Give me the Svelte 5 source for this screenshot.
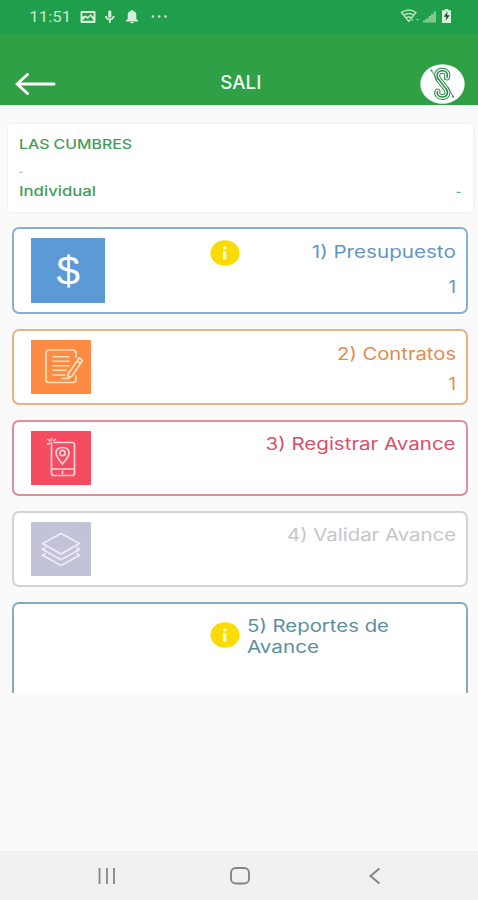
<script>
  // Stretches a label horizontally so that it takes up the given width.
  function fit(node, width) {
    node.style.transform = `scaleX(${width / node.getBoundingClientRect().width})`;
  }

  const cards = [
    { kind: 'budget', label: '1) Presupuesto', width: 144, count: '1', info: true },
    { kind: 'contracts', label: '2) Contratos', width: 119, count: '1' },
    { kind: 'progress', label: '3) Registrar Avance', width: 190 },
    { kind: 'validate', label: '4) Validar Avance', width: 169 }
  ];
</script>

{#snippet info()}
  <svg class="info" width="30" height="26" viewBox="0 0 30 26">
    <ellipse cx="15" cy="13" rx="14.6" ry="12.8" fill="#fadb05" />
    <circle cx="14.8" cy="7.900" r="1.700" fill="#fffbe0" />
    <path d="M13 11h3.300v8.500H13z" fill="#fffbe0" />
  </svg>
{/snippet}

<div class="screen">
  <div class="status">
    <span class="time"><span class="fit" use:fit={42}>11:51</span></span>
    <svg class="notes" width="90" height="16" viewBox="0 0 90 16">
      <path fill="#d3f0d6" fill-rule="evenodd" d="M1.500 2h13q1 0 1 1v10q0 1-1 1h-13q-1 0-1-1V3q0-1 1-1zM2.300 11.800h11.500L10.500 7.200 7.800 10 5.500 8.600zM2.400 4v3.500l3-1 2.600 1.300 2.500-2.800 3.100 3V4z" />
      <path fill="#d3f0d6" d="M28.200 2.500q0-1 1.600-1t1.600 1v5.200q0 1-1.600 1t-1.600-1zM25 7h1.800q.4 2.700 3 2.800 2.600-.1 3-2.800h1.800q-.3 3.500-3.900 4.200V14h-1.800v-2.800Q25.300 10.500 25 7z" />
      <path fill="#d3f0d6" d="M50.700 2.100q0-1.200 1.300-1.200t1.300 1.200q3 .7 3 4v3.600l1.700 2v.7h-12v-.7l1.700-2V6.100q0-3.300 3-4zM50.200 13h3.600q-.5 1.400-1.800 1.400T50.200 13z" />
      <circle cx="73" cy="7.500" r="1.300" fill="#c9ebcf" /><circle cx="79.200" cy="7.500" r="1.300" fill="#c9ebcf" /><circle cx="85.500" cy="7.500" r="1.300" fill="#c9ebcf" />
    </svg>
    <svg class="signals" width="54" height="18" viewBox="0 0 54 18">
      <g fill="none" stroke="#bce6bd" stroke-width="1.400">
        <path d="M1.500 4.500Q9 -.500 16 4.500L8.800 13.500zM3.800 7.300q5-3.500 10 0M6 10q3-2 5.700 0" />
      </g>
      <path d="M12.500 10.500l1.500 2h-3zM17.500 13l-1.500-2h3z" fill="#8fd19b" />
      <path d="M23 14.500v-2h2.500v-2h3v-2.500h2.500V6h2.500V3.500H36v11z" fill="#83c98d" />
      <path d="M43 2.300h1.800V1h3.500v1.300H51V15h-9V2.300z" fill="#d9f3da" />
      <path d="M47.500 3.500l-3.700 5.200h2.600l-.7 4 4-5.500h-2.600z" fill="#184f28" />
    </svg>
  </div>

  <header>
    <svg class="back" width="42" height="24" viewBox="0 0 42 24" fill="none" stroke="#fff" stroke-width="3" stroke-linecap="round" stroke-linejoin="round">
      <path d="M12.500 2.500 2 12l10.500 9.500M2.500 12h36.500" />
    </svg>
    <h1><span class="fit" use:fit={41}>SALI</span></h1>
    <svg class="logo" width="46" height="40" viewBox="0 0 46 40">
      <ellipse cx="23.500" cy="20" rx="22.200" ry="19.800" fill="#fff" />
      <g fill="none" stroke-linejoin="round" stroke-linecap="round">
        <path d="M28 13.500C29.500 8.500 26 6.300 22.500 6.800 18 7.500 17.200 11.500 19 14.500L27.500 25.500C30 29.500 27.500 33 23.500 33 19.500 33 17.500 30.500 18.500 27.500" stroke="#258c47" stroke-width="6" />
        <path d="M28 13.500C29.500 8.500 26 6.300 22.500 6.800 18 7.500 17.200 11.500 19 14.500L27.500 25.500C30 29.500 27.500 33 23.500 33 19.500 33 17.500 30.500 18.500 27.500" stroke="#fff" stroke-width="4" />
        <path d="M28 13.500C29.500 8.500 26 6.300 22.500 6.800 18 7.500 17.200 11.500 19 14.500L27.500 25.500C30 29.500 27.500 33 23.500 33 19.500 33 17.500 30.500 18.500 27.500" stroke="#258c47" stroke-width="1.500" />
        <path d="M12.500 6.500 18 15.500M29 23.500 34 32.500" stroke="#258c47" stroke-width=".9" />
      </g>
      <circle cx="12.500" cy="6.500" r="1" fill="#258c47" /><circle cx="34" cy="32.500" r="1" fill="#258c47" />
    </svg>
  </header>

  <main>
    <section class="summary">
      <div class="row"><span class="fit left" use:fit={113}>LAS CUMBRES</span></div>
      <div class="row faint"><span class="fit left" use:fit={4}>-</span></div>
      <div class="row last"><span class="fit left" use:fit={77}>Individual</span><span class="fit right dash" use:fit={5}>-</span></div>
    </section>

    {#each cards as card}
      <section class="card {card.kind}">
        <div class="tile">
          {#if card.kind === 'budget'}
            <span class="dollar"><span class="fit" use:fit={23.500}>$</span></span>
          {:else if card.kind === 'contracts'}
            <svg width="60" height="54" viewBox="0 0 60 54" fill="none" stroke="#ffe0bf" stroke-width="1.700" stroke-linecap="round" stroke-linejoin="round">
              <path d="M45 17v-4q0-3-3-3H18q-3 0-3 3v26q0 3.500 3 3.500h24q3 0 3-3v-3.500" />
              <path d="M22 16.700h16M22 21.300h16M22 25.800h16M22 30.300h13M22 35h12M31 38.500h6" stroke-width="1.400" />
              <path d="M37.500 33.500 48 18l3.500 2.500-10.500 15.500-4.500 2.500zM46 21l3.500 2.500" fill="#fc8a42" />
            </svg>
          {:else if card.kind === 'progress'}
            <svg width="60" height="54" viewBox="0 0 60 54" fill="none" stroke="#ffd3d8" stroke-width="1.700" stroke-linejoin="round">
              <path d="M25 11.500h16.500q2 0 2 2V42q0 2.500-2 2.500h-19q-2 0-2-2.500V15M20.500 38h23" />
              <path d="M31.500 33q-6.500-7.500-6.500-11 0-5.500 6.500-5.500T38 22q0 3.500-6.500 11z" />
              <circle cx="31.500" cy="22" r="2.700" />
              <path d="M16.500 8l3 2.200M20.500 7.300v2.500M24.500 8l-2 2.200M16 13.500l3.200-1.500M20.500 11v4M22.500 11.500h3M31.500 39.500v3.500" stroke-width="1.500" />
            </svg>
          {:else}
            <svg width="60" height="54" viewBox="0 0 60 54" fill="none" stroke="#ededf7" stroke-width="1.700" stroke-linejoin="round">
              <path d="M30 11.500 48.500 21.500 30 32 11.500 21.500z" />
              <path d="M14.500 25.500 11.500 27.500 30 37.700 48.500 27.500 45.500 25.500M14.500 31.500 11.500 33.300 30 43.500 48.500 33.300 45.500 31.500" />
            </svg>
          {/if}
        </div>
        {#if card.info}{@render info()}{/if}
        <div class="text">
          <div class="label"><span class="fit right" use:fit={card.width}>{card.label}</span></div>
          {#if card.count}<div class="count"><span class="fit right" use:fit={7.500}>{card.count}</span></div>{/if}
        </div>
      </section>
    {/each}

    <section class="card reports">
      {@render info()}
      <div class="lines">
        <div><span class="fit left" use:fit={142}>5) Reportes de</span></div>
        <div><span class="fit left" use:fit={72}>Avance</span></div>
      </div>
    </section>
  </main>

  <nav>
    <svg width="20" height="18" viewBox="0 0 20 18" stroke="#858585" stroke-width="1.800"><path d="M2.500 1v16M10 1v16M17 1v16" /></svg>
    <svg class="home" width="22" height="20" viewBox="0 0 22 20" fill="none" stroke="#858585" stroke-width="1.900"><rect x="2" y="2" width="18" height="15.500" rx="4.800" /></svg>
    <svg width="14" height="18" viewBox="0 0 14 18" fill="none" stroke="#858585" stroke-width="1.900"><path d="M11.500 1.500 2.500 9l9 7.500" /></svg>
  </nav>
</div>

<style>
  :global(body) { background: #fafafa; }
  .screen {
    width: 478px;
    height: 900px;
    display: flex;
    flex-direction: column;
    overflow: hidden;
    background: #fafafa;
    font-family: Inter, "Liberation Sans", sans-serif;
  }
  svg { display: block; flex: none; }
  .fit { display: inline-block; white-space: nowrap; }
  .left { transform-origin: left; }
  .right { transform-origin: right; }

  .status {
    height: 34px;
    flex: none;
    box-sizing: border-box;
    display: flex;
    align-items: center;
    background: #1f9e4b;
    padding: 0 24.500px 0 29px;
  }
  .time {
    width: 42px;
    display: flex;
    justify-content: center;
    font: 15.500px Roboto, sans-serif;
    color: #c5eccb;
  }
  .notes { margin-left: 9px; }
  .signals { margin-left: auto; }

  header {
    height: 71px;
    flex: none;
    box-sizing: border-box;
    display: flex;
    align-items: flex-start;
    background: #2fa045;
    padding: 29px 13px 0 15px;
  }
  .back { margin-top: 9px; }
  h1 {
    flex: 1;
    margin: 8px 0 0;
    padding-left: 5px;
    text-align: center;
    font-size: 19px;
    line-height: 24px;
    font-weight: 500;
    color: #f2fff0;
  }
  .logo { margin-top: 1px; }

  main {
    height: 588px;
    flex: none;
    box-sizing: border-box;
    overflow: hidden;
    padding: 19px 5px 0 8px;
    display: flex;
    flex-direction: column;
  }
  .summary {
    height: 88px;
    flex: none;
    box-sizing: border-box;
    padding: 10px 12px 0 10.500px;
    background: #fff;
    border-radius: 4px;
    box-shadow: 0 0 3px #0000001a;
    font-size: 13px;
    font-weight: 500;
    color: #459c5a;
  }
  .row { display: flex; justify-content: space-between; height: 20px; line-height: 20px; }
  .faint { color: #aaa; height: 27px; line-height: 34px; }
  .dash { color: #619c96; }

  .card {
    flex: none;
    box-sizing: border-box;
    height: 76px;
    margin: 15px 0 0 4px;
    width: 456px;
    display: flex;
    padding: 9px 10px 0 16.500px;
    border: 2px solid;
    border-radius: 7px;
    background: #fff;
    font-size: 17px;
    line-height: 22px;
  }
  .budget { height: 87px; color: #6494c4; border-color: #8bafd4; }
  .contracts { color: #e38b4d; border-color: #e9b08b; }
  .progress { color: #d7506a; border-color: #e28b9a; }
  .validate { color: #c5c6cc; border-color: #d2d3d6; }
  .tile {
    width: 60.500px;
    height: 54px;
    flex: none;
    display: flex;
    align-items: center;
    justify-content: center;
  }
  .budget .tile { width: 74px; height: 65px; background: #5b9ad4; }
  .contracts .tile { background: #fd8b43; }
  .progress .tile { background: #f64c62; }
  .validate .tile { background: #c2c3d8; }
  .dollar { padding-left: 2px; color: #fff; font: 40px/62px "Liberation Sans", sans-serif; }
  .budget .info { margin: 2px 0 0 105px; }
  .text { flex: 1; text-align: right; }
  .label { margin-top: 2px; }
  .budget .label, .contracts .label { margin-top: 3px; }
  .count { margin-top: 8px; }
  .budget .count { margin-top: 13px; }

  .reports {
    height: 110px;
    margin-top: 15px;
    padding: 12px 0 0 195.500px;
    color: #5a8fa0;
    border-color: #85aabd;
    line-height: 21px;
  }
  .reports .info { margin-top: 6px; }
  .lines { margin-left: 7.500px; }

  nav {
    margin-top: auto;
    height: 49px;
    flex: none;
    box-sizing: border-box;
    display: flex;
    align-items: center;
    justify-content: space-between;
    padding: 0 96px 0 97px;
    background: #f1f1f1;
  }
  .home { margin-right: 5px; }
</style>
